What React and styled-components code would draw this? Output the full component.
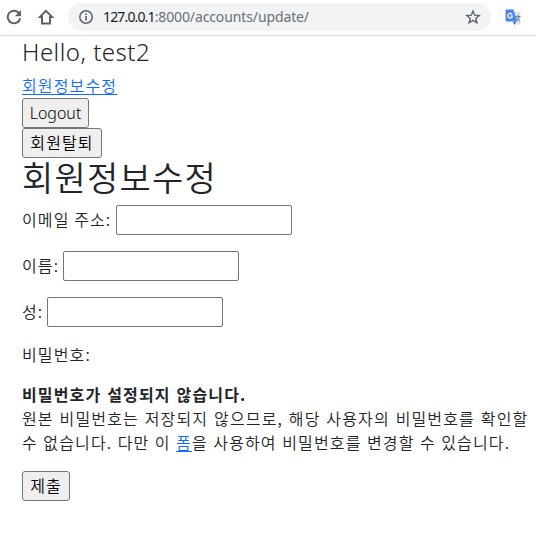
import React from "react";
import styled, { createGlobalStyle } from "styled-components";

const GlobalStyle = createGlobalStyle`
  *, *::before, *::after { box-sizing: border-box; }
  body {
    margin: 0;
    background: #fff;
    color: #212529;
    font: 400 16px/24px "Noto Sans", "Noto Sans CJK KR", sans-serif;
    overflow: hidden;
  }
`;

const KO = '"Noto Sans CJK KR", "Noto Sans", sans-serif';

const Toolbar = styled.header`
  display: flex;
  align-items: center;
  height: 36px;
  padding: 0 15px 2px 6px;
  border-bottom: 1px solid #dadce0;
`;

const ToolIcon = styled.svg`
  flex: none;
  width: ${(p) => p.$size}px;
  height: ${(p) => p.$size}px;
  margin-right: ${(p) => p.$gap || 0}px;
`;

const ExtensionIcon = styled(ToolIcon)`
  margin-top: 1px;
`;

const AddressBar = styled.div`
  flex: none;
  display: flex;
  align-items: center;
  width: 423px;
  height: 28px;
  margin-right: 14px;
  padding: 0 10px;
  border-radius: 14px;
  background: #f1f3f4;
`;

const Url = styled.span`
  flex: 1;
  color: #6b6f73;
  font: 14px/20px "Noto Sans", sans-serif;
  letter-spacing: -0.12px;
  white-space: nowrap;
`;

const Host = styled.span`
  color: #202124;
  letter-spacing: -0.85px;
`;

const Page = styled.main`
  padding: 1px 0 0 22px;
`;

const Greeting = styled.h4`
  margin: 0 0 7px;
  font-weight: 350;
  font-size: 24px;
  line-height: 29px;
  letter-spacing: 0.5px;
`;

const Title = styled.h2`
  margin: 0 0 7px;
  height: 40px;
  font: 350 34px/38px ${KO};
  letter-spacing: 1.2px;
`;

const Link = styled.a`
  color: #0d6efd;
  text-decoration: underline;
  text-underline-offset: 2px;
  cursor: pointer;
`;

const Korean = styled.div`
  font-family: ${KO};
  font-weight: ${(p) => (p.$bold ? 600 : 350)};
  letter-spacing: 1.15px;
  word-spacing: ${(p) => p.$wordSpacing ?? 1.1}px;
  line-height: 24px;
  white-space: nowrap;
`;

const Button = styled.button`
  display: block;
  width: ${(p) => p.$width}px;
  height: 30px;
  padding: 0 0 ${(p) => (p.$latin ? 0 : 2)}px;
  border: 1px solid #767676;
  border-radius: 3px;
  background: #efefef;
  color: #000;
  font: 350 16px/24px ${(p) => (p.$latin ? '"Noto Sans", sans-serif' : KO)};
  letter-spacing: ${(p) => (p.$latin ? 0 : 1.1)}px;
  white-space: nowrap;
`;

const LinkRow = styled(Korean)`
  margin-bottom: 1px;
`;

const Field = styled.label`
  display: flex;
  align-items: center;
  height: 30px;
  margin-bottom: 16px;
  font-family: ${KO};
  font-weight: 350;
  letter-spacing: 1.1px;
`;

const FieldName = styled.span`
  flex: none;
  width: ${(p) => p.$width}px;
  padding-bottom: 2px;
  white-space: nowrap;
`;

const Input = styled.input`
  width: 176px;
  height: 30px;
  border: 1px solid #767676;
  border-radius: 2px;
  background: #fff;
  font: inherit;
  outline: none;
`;

const Fields = styled.div`
  margin-bottom: -1px;
`;

const Group = styled.section`
  margin-bottom: 16px;

  &:last-of-type {
    margin-bottom: 17px;
  }
`;

export default function App() {
  return (
    <>
      <GlobalStyle />
      <Toolbar>
        <ToolIcon $size={16} $gap={16} viewBox="0 0 16 16">
          <path d="M13.2 4.4A6.3 6.3 0 1 0 14.2 9.3" fill="none" stroke="#5f6368" strokeWidth="2" />
          <path d="M15 1v6.2H8.8z" fill="#5f6368" />
        </ToolIcon>
        <ToolIcon $size={16} $gap={14} viewBox="0 0 16 16">
          <path d="M8 1.8 1.800 8H4v6.600h8V8h2.200z" fill="none" stroke="#5f6368" strokeWidth="2" />
        </ToolIcon>
        <AddressBar>
          <ToolIcon $size={16} $gap={9} viewBox="0 0 16 16">
            <circle cx="8" cy="8" r="6.200" fill="none" stroke="#5f6368" strokeWidth="1.5" />
            <path d="M8 7v4.500M8 4.300v1.600" stroke="#5f6368" strokeWidth="1.600" />
          </ToolIcon>
          <Url>
            <Host>127.0.0.1</Host>:8000/accounts/update/
          </Url>
          <ToolIcon $size={16} viewBox="0 0 16 16">
            <path
              d="m8 2 1.700 4.200 4.500.3-3.400 2.900 1.100 4.400L8 11.400l-3.900 2.400 1.100-4.400L1.800 6.500l4.500-.3z"
              fill="none"
              stroke="#5f6368"
              strokeWidth="1.400"
            />
          </ToolIcon>
        </AddressBar>
        <ExtensionIcon $size={17} viewBox="0 0 17 17">
          <path d="M6 3h9.500v12.500H9.500z" fill="#dfe1e5" />
          <path d="M8 12.500h3l-1.500 3.500z" fill="#3059c9" />
          <path d="M1 .5h7.500L12 12.500H1.600a1 1 0 0 1-1-1V1z" fill="#4a86ee" />
          <path d="M7 5.400A2.300 2.300 0 1 0 7.400 7H5.400" fill="none" stroke="#fff" strokeWidth="1.200" />
          <path d="M10.500 7.500h5M13 6v1.500M14.500 7.500c-.5 2-1.600 3.500-3 4.500M11.500 8.500c.8 1.600 1.900 2.800 3.300 3.700" fill="none" stroke="#607d8b" strokeWidth="1" />
        </ExtensionIcon>
      </Toolbar>
      <Page>
        <Greeting>Hello, test2</Greeting>
        <LinkRow>
          <Link>회원정보수정</Link>
        </LinkRow>
        <Button $width={67} $latin>Logout</Button>
        <Button $width={80}>회원탈퇴</Button>
        <Title>회원정보수정</Title>
        <Fields>
          <Field>
            <FieldName $width={94}>이메일 주소:</FieldName>
            <Input type="text" />
          </Field>
          <Field>
            <FieldName $width={41}>이름:</FieldName>
            <Input type="text" />
          </Field>
          <Field>
            <FieldName $width={25}>성:</FieldName>
            <Input type="text" />
          </Field>
        </Fields>
        <Group>
          <Korean>비밀번호:</Korean>
        </Group>
        <Group>
          <Korean $bold>비밀번호가 설정되지 않습니다.</Korean>
          <Korean>원본 비밀번호는 저장되지 않으므로, 해당 사용자의 비밀번호를 확인할</Korean>
          <Korean $wordSpacing={0.7}>
            수 없습니다. 다만 이 <Link>폼</Link>을 사용하여 비밀번호를 변경할 수 있습니다.
          </Korean>
        </Group>
        <Button $width={48}>제출</Button>
      </Page>
    </>
  );
}
